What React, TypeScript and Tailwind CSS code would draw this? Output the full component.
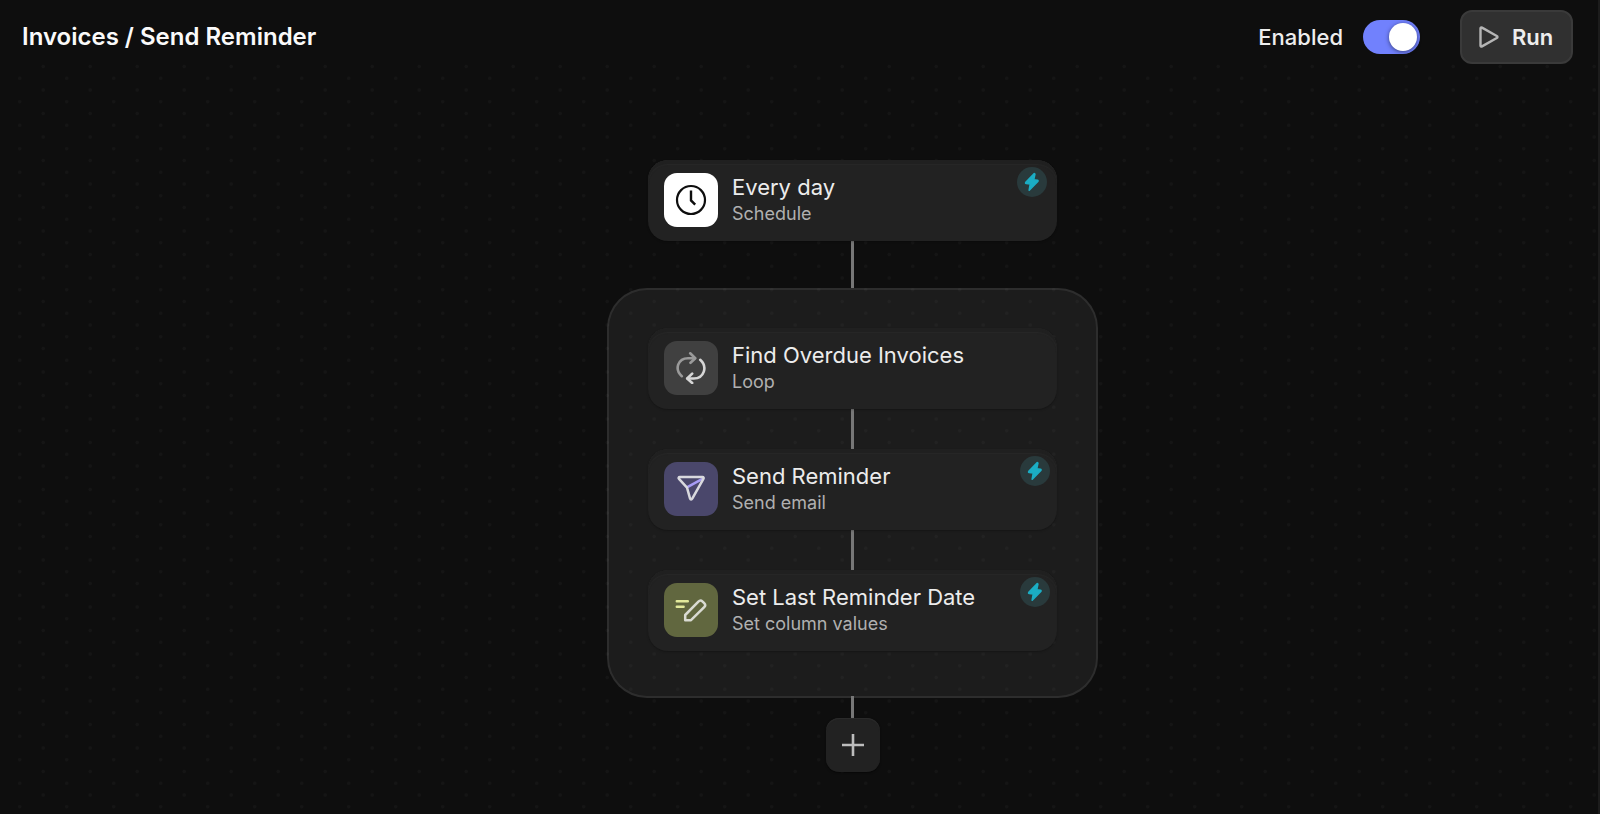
import { useState } from "react";
import type { ReactNode } from "react";

interface Step {
  title: string;
  subtitle: string;
  icon: ReactNode;
  iconBg: string;
  boltClass?: string;
}

const ClockIcon = () => (
  <svg viewBox="0 0 32 32" className="size-8" fill="none" stroke="#0e0e0e" strokeWidth="2.200" aria-hidden="true">
    <circle cx="16" cy="16" r="14" />
    <path d="M16 6.500V16.400L20.200 20.600" strokeWidth="2.400" />
  </svg>
);

const LoopIcon = () => (
  <svg viewBox="0 0 32 32" className="size-8" fill="none" strokeWidth="2.600" strokeLinecap="round" strokeLinejoin="round" aria-hidden="true">
    <g stroke="#9a9a9a">
      <path d="M6.800 24.200C3 20.800 1.900 16.600 3.200 12.700C4.700 8.500 8.500 6.200 13 6.200H19.500" />
      <path d="M15.200 1.300L20.300 6.200L15.500 10.800" />
    </g>
    <g stroke="#d6d6d6">
      <path d="M25.200 7.800C29 11.200 30.100 15.600 28.800 19.600C27.300 23.900 23.300 26.500 18.800 26.500H12.600" />
      <path d="M17.200 21.600L12.200 26.500L17.200 31" />
    </g>
  </svg>
);

const SendIcon = () => (
  <svg viewBox="0 0 32 32" className="size-8" fill="none" strokeWidth="2.500" strokeLinecap="round" strokeLinejoin="round" aria-hidden="true">
    <path d="M12.800 13.800L27 6.200" stroke="#a79cf5" />
    <path d="M4.800 4H27.400C28.600 4 29 4.900 28.400 5.900L17.400 25.400C16.600 26.800 15.500 26.700 15 25.300L12 14.600L4 5.900C3.200 5 3.600 4 4.800 4Z" stroke="#d9d9de" />
  </svg>
);

const EditIcon = () => (
  <svg viewBox="0 0 32 32" className="size-8" fill="none" strokeWidth="2.500" strokeLinecap="round" strokeLinejoin="round" aria-hidden="true">
    <path d="M1.800 7.300H12.800M1.800 12.800H8.600" stroke="#e3ea9c" />
    <path d="M10.200 21L23.400 7.600C24.700 6.300 26.300 6.300 27.600 7.600L29.200 9.200C30.400 10.400 30.400 12 29.200 13.200L16 26.200H10.200Z" stroke="#d9dad2" />
  </svg>
);

const trigger: Step = {
  title: "Every day",
  subtitle: "Schedule",
  icon: <ClockIcon />,
  iconBg: "bg-white",
  boltClass: "top-[7px] right-[10px]",
};

const loopSteps: Step[] = [
  {
    title: "Find Overdue Invoices",
    subtitle: "Loop",
    icon: <LoopIcon />,
    iconBg: "bg-[#404040]",
  },
  {
    title: "Send Reminder",
    subtitle: "Send email",
    icon: <SendIcon />,
    iconBg: "bg-[#4a476b]",
    boltClass: "top-[7px] right-[7px]",
  },
  {
    title: "Set Last Reminder Date",
    subtitle: "Set column values",
    icon: <EditIcon />,
    iconBg: "bg-[#61673f]",
    boltClass: "top-[7px] right-[7px]",
  },
];

function Bolt({ className }: { className: string }) {
  return (
    <span className={`absolute flex size-[30px] items-center justify-center rounded-full bg-[#293a3c] ${className}`}>
      <svg viewBox="0 0 20 20" className="size-5" fill="#1badc4" stroke="#1badc4" strokeWidth="1.600" strokeLinejoin="round" aria-hidden="true">
        <path d="M12.300 1.500L3.800 10.400C3.400 10.900 3.600 11.400 4.200 11.500L8.300 12L7.200 18.200L15.800 9.500C16.300 9 16.100 8.400 15.400 8.300L11.700 7.800L12.900 2Z" />
      </svg>
    </span>
  );
}

function StepCard({ step }: { step: Step }) {
  return (
    <button
      type="button"
      className="relative flex h-[81px] w-[409px] items-start gap-3.5 rounded-[20px] bg-[#222222] px-4 pt-[13px] text-left shadow-[inset_0_4px_1px_#202020,inset_0_5px_1px_#282828,0_1px_2px_#00000040]"
    >
      <span className={`flex size-[54px] shrink-0 items-center justify-center rounded-[13px] ${step.iconBg}`}>
        {step.icon}
      </span>
      <span className="flex flex-col">
        <span className="text-[22px] leading-[28px] text-[#ececec]">{step.title}</span>
        <span className="text-[18px] leading-[26px] text-[#b0b0b0]">{step.subtitle}</span>
      </span>
      {step.boltClass && <Bolt className={step.boltClass} />}
    </button>
  );
}

function Connector({ className }: { className: string }) {
  return <div className={`w-[3px] bg-[#777777] ${className}`} />;
}

function DotGrid() {
  return (
    <svg className="absolute inset-0 size-full" aria-hidden="true">
      <defs>
        <pattern id="dots" width="47" height="47" patternUnits="userSpaceOnUse">
          <g fill="#151515">
            <circle cx="19.700" cy="7.700" r="1.700" />
            <circle cx="19.700" cy="31.200" r="1.700" />
            <circle cx="43.200" cy="19.500" r="1.700" />
            <circle cx="43.200" cy="43" r="1.700" />
          </g>
        </pattern>
      </defs>
      <rect y="60" width="100%" height="100%" fill="url(#dots)" />
    </svg>
  );
}

export default function App() {
  const [enabled, setEnabled] = useState(true);

  return (
    <div className="relative min-h-screen border-r-2 border-[#1c1c1c] bg-[#0e0e0e] font-['Inter',sans-serif]">
      <DotGrid />

      <div className="relative">
        <header className="flex h-[74px] items-center justify-between pr-[25px] pl-[22px]">
          <h1 className="text-[24px] leading-8 font-semibold text-[#fafafa]">Invoices / Send Reminder</h1>

          <div className="flex items-center">
            <label htmlFor="enabled" className="text-[22px] font-medium text-[#ededed]">
              Enabled
            </label>
            <span className="relative ml-5 flex h-[34px] w-[57px]">
              <input
                id="enabled"
                type="checkbox"
                role="switch"
                checked={enabled}
                onChange={(e) => setEnabled(e.target.checked)}
                className="peer size-full cursor-pointer appearance-none rounded-full bg-[#3a3a3a] checked:bg-[#7181fd]"
              />
              <span className="pointer-events-none absolute top-[3px] left-1 size-7 rounded-full bg-white shadow-[0_1px_4px_#00000080] peer-checked:left-[26px]" />
            </span>
            <button
              type="button"
              className="ml-10 flex h-[54px] w-[113px] items-center gap-3 rounded-xl border-2 border-[#3a3a3a] bg-[#303030] pl-4 text-[22px] font-semibold text-[#ededed]"
            >
              <svg viewBox="0 0 22 22" className="size-[22px]" fill="none" stroke="#b5b5b5" strokeWidth="2.400" strokeLinejoin="round" aria-hidden="true">
                <path d="M2.500 2.500V19.500C2.500 20.500 3.200 20.800 4 20.400L18.800 12C19.700 11.500 19.700 10.500 18.800 10L4 1.600C3.200 1.200 2.500 1.500 2.500 2.500Z" />
              </svg>
              Run
            </button>
          </div>
        </header>

        {/* Flow */}
        <main className="flex flex-col items-center pt-[86px] pb-[43px] pl-[107px]">
          <StepCard step={trigger} />
          <Connector className="h-[47px]" />

          <section className="flex flex-col items-center rounded-[40px] border-2 border-white/8 bg-white/6 px-[39px] pt-[38px] pb-[45px]">
            {loopSteps.map((step, index) => (
              <div key={step.title} className="flex flex-col items-center">
                {index > 0 && <Connector className="h-10" />}
                <StepCard step={step} />
              </div>
            ))}
          </section>

          <Connector className="-mt-[2px] h-[22px]" />
          <button
            type="button"
            aria-label="Add step"
            className="flex size-[54px] items-center justify-center rounded-[13px] bg-[#222222] shadow-[inset_0_1px_1px_#2c2c2c,0_1px_2px_#00000080]"
          >
            <svg viewBox="0 0 22 22" className="size-[22px]" stroke="#bdbdbd" strokeWidth="2.600" aria-hidden="true">
              <path d="M11 0V22M0 11H22" />
            </svg>
          </button>
        </main>
      </div>
    </div>
  );
}
